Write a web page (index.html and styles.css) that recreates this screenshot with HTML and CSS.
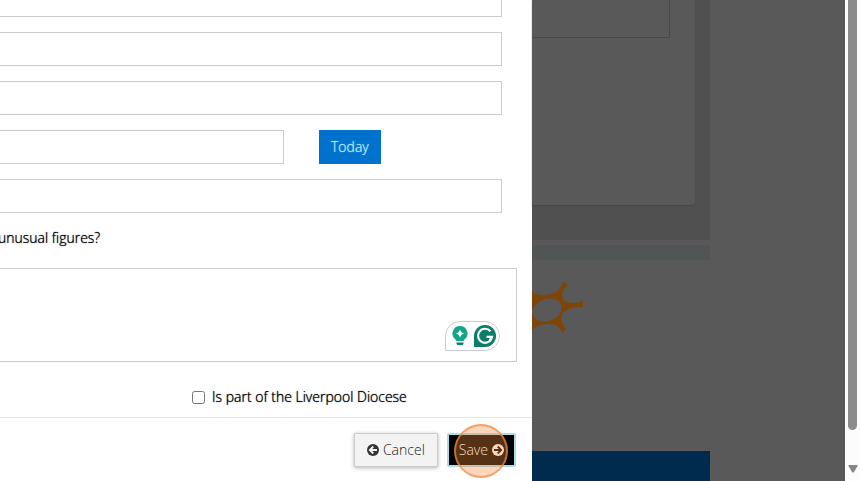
FILE: index.html
```
<!DOCTYPE html>
<html lang="en">
<head>
  <meta charset="UTF-8">
  <meta name="viewport" content="width=device-width, initial-scale=1.0">
  <title>Edit Return</title>
  <link rel="stylesheet" href="styles.css">
</head>
<body>
  <div class="screen">
    <form class="modal">
      <div class="modal-body">
        <input class="field" type="text" aria-label="Name">
        <input class="field" type="text" aria-label="Role">
        <input class="field" type="text" aria-label="Email">
        <div class="date-row">
          <input class="field" type="text" aria-label="Date">
          <button class="btn-today" type="button">Today</button>
        </div>
        <input class="field" type="text" aria-label="Completed by">
        <label class="question" for="notes">unusual figures?</label>
        <div class="notes">
          <textarea id="notes"></textarea>
          <div class="assistant">
            <svg width="16" height="20" viewBox="0 0 16 20">
              <path fill="#12a58a" d="M8 0a7.5 7.5 0 0 1 4.500 13.500L11.500 15h-7L3.500 13.500A7.500 7.500 0 0 1 8 0z"/>
              <path fill="#fff" d="M8 3.500l1.300 2.700L12 7.500 9.300 8.800 8 11.500 6.700 8.800 4 7.500l2.700-1.300z"/>
              <path fill="#0b7d69" d="M4.500 16.500h7v1.500l-1 1h-5l-1-1z"/>
            </svg>
            <svg width="22" height="22" viewBox="0 0 22 22">
              <path fill="#0b7d69" d="M11 0a11 11 0 0 1 0 22H0V11A11 11 0 0 1 11 0z"/>
              <path fill="none" stroke="#fff" stroke-width="2.200" d="M16.500 6.300A7 7 0 1 0 18 11.800h-5.500M18 11.800l-2.500 4"/>
            </svg>
          </div>
        </div>
        <div class="check-row">
          <input type="checkbox" id="diocese">
          <label for="diocese">Is part of the Liverpool Diocese</label>
        </div>
      </div>
      <div class="modal-footer">
        <button class="btn btn-cancel" type="button">
          <svg width="12" height="12" viewBox="0 0 12 12">
            <circle cx="6" cy="6" r="6" fill="#333"/>
            <path fill="none" stroke="#f3f3f3" stroke-width="1.800" d="M6.300 2.500L2.800 6l3.500 3.500M3 6h7"/>
          </svg>
          Cancel
        </button>
        <button class="btn btn-save" type="button">
          Save
          <svg width="12" height="12" viewBox="0 0 12 12">
            <circle cx="6" cy="6" r="6" fill="#fff"/>
            <path fill="none" stroke="#000" stroke-width="1.800" d="M5.700 2.500L9.200 6 5.700 9.500M9 6H2"/>
          </svg>
          <span class="click-ring"></span>
        </button>
      </div>
    </form>

    <div class="page">
      <div class="panel">
        <div class="card">
          <div class="card-box"></div>
        </div>
      </div>
      <div class="strip"></div>
      <div class="logo">
        <svg width="52" height="58" viewBox="0 0 52 58">
          <path fill="#7e4408" d="M0 10C3 13 6 14 11 14C22 14 28 10 31 1L36 3C31 9 29 14 31 18C34 23 43 23 51 20V26C41 26 34 28 31 32C28 37 30 43 34 48L30 52C28 46 25 43 17 43C9 43 4 45 0 49z"/>
          <ellipse fill="#595959" cx="15" cy="29" rx="15" ry="11" transform="rotate(-20 15 29)"/>
        </svg>
      </div>
      <div class="page-footer"></div>
    </div>

    <div class="scrollbar">
      <div class="thumb"></div>
      <svg class="arrow" width="10" height="8" viewBox="0 0 10 8">
        <path fill="#858585" d="M1 0h8q1 0 .5 1L6 7q-1 1-2 0L.5 1Q0 0 1 0z"/>
      </svg>
    </div>
  </div>
</body>
</html>
```
FILE: styles.css
```
:root {
  --blue: #0072ce;
  --field-border: #ccc;
  --dim: #595959;
  --dim-dark: #505050;
}

* {
  box-sizing: border-box;
}

body {
  margin: 0;
  overflow: hidden;
  font-family: "Open Sans", sans-serif;
  font-size: 14px;
  font-weight: 300;
  line-height: 20px;
  color: #000;
}

label {
  text-shadow: 0 0 1px #000;
}

.screen {
  display: grid;
  grid-template-columns: 532fr 313fr 15px;
  height: 100vh;
}

/* dialog */
.modal {
  display: flex;
  flex-direction: column;
  background: #fff;
  overflow: hidden;
}

.modal-body {
  display: flex;
  flex-direction: column;
  gap: 15px;
  padding-right: 30px;
  margin-top: -17px;
}

.field {
  width: 100%;
  height: 34px;
  border: 1px solid var(--field-border);
  border-left: none;
  background: #fff;
}

.date-row {
  display: grid;
  grid-template-columns: 284fr 183fr;
  column-gap: 35px;
  justify-items: start;
}

.btn-today {
  height: 34px;
  padding: 0 12px;
  border: none;
  background: var(--blue);
  color: #b5ecff;
  font: inherit;
  text-shadow: 0 0 1px #b5ecff;
}

.question {
  height: 25px;
  margin-left: -2px;
}

.notes {
  position: relative;
  height: 94px;
  margin-right: -15px;
}

.notes textarea {
  display: block;
  width: 100%;
  height: 100%;
  border: 1px solid var(--field-border);
  border-left: none;
  resize: none;
}

.assistant {
  position: absolute;
  right: 17px;
  bottom: 11px;
  display: flex;
  align-items: center;
  gap: 6px;
  height: 30px;
  padding: 0 3px 0 6px;
  border: 1px solid #c9ccd4;
  border-radius: 15px 15px 15px 0;
  background: #fff;
}

.check-row {
  display: flex;
  align-items: center;
  gap: 7px;
  margin: 10px 0 0 192px;
}

.check-row input {
  width: 13px;
  height: 13px;
  margin: 0;
}

.modal-footer {
  display: flex;
  justify-content: flex-end;
  gap: 9px;
  margin-top: 10px;
  padding: 15px 16px;
  border-top: 1px solid #e5e5e5;
}

.btn {
  display: flex;
  align-items: center;
  gap: 4px;
  height: 34px;
  padding: 0 12px;
  font: inherit;
}

.btn-cancel {
  border: 1px solid #ccc;
  background: #f3f3f3;
  color: #222;
  box-shadow: 0 1px 4px rgba(0, 0, 0, 0.3);
}

.btn-save {
  position: relative;
  padding: 0 10px;
  border: 2px solid #a8dcec;
  border-radius: 2px;
  background: #000;
  color: #fff;
}

.click-ring {
  position: absolute;
  top: -11px;
  left: 5px;
  width: 54px;
  height: 54px;
  border: 2px solid rgba(240, 140, 65, 0.7);
  border-radius: 50%;
  background: rgba(246, 140, 60, 0.35);
}

/* dimmed page behind the dialog */
.page {
  display: flex;
  flex-direction: column;
  padding-right: 135px;
  background: var(--dim);
}

.panel {
  height: 240px;
  padding-right: 15px;
  background: var(--dim-dark);
}

.card {
  height: 205px;
  padding-right: 25px;
  border-radius: 0 0 4px 0;
  background: var(--dim);
  box-shadow: 0 1px 1px #484848;
}

.card-box {
  height: 38px;
  border: 1px solid #484848;
  border-width: 0 1px 1px 0;
}

.strip {
  height: 15px;
  margin-top: 5px;
  background: #525555;
}

.logo {
  margin-top: 21px;
}

.page-footer {
  height: 30px;
  margin-top: auto;
  background: #002b4f;
}

.scrollbar {
  display: flex;
  flex-direction: column;
  justify-content: space-between;
  align-items: center;
  height: 100vh;
  padding-bottom: 8px;
  background: #fcfcfc;
}

.thumb {
  width: 9px;
  height: 91%;
  border-radius: 0 0 5px 5px;
  background: #8b8b8b;
}
```
